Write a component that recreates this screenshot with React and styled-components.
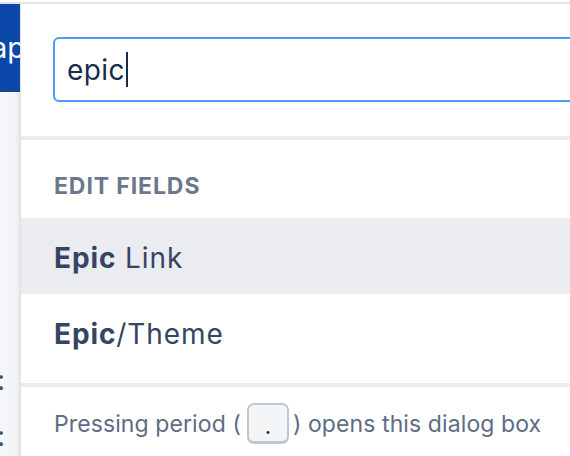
import React from "react";
import styled, { createGlobalStyle } from "styled-components";

const Global = createGlobalStyle`
  html, body {
    margin: 0;
    padding: 0;
    background: #ffffff;
    overflow: hidden;
  }
  body {
    font-family: Inter, "Noto Sans", sans-serif;
  }
`;

const Page = styled.div`
  width: 570px;
  height: 456px;
  overflow: hidden;
  padding-top: 2px;
  box-sizing: border-box;
`;

const TopLine = styled.div`
  height: 2px;
  background: #e4e4e6;
`;

const Body = styled.div`
  display: flex;
  height: 452px;
`;

const Side = styled.div`
  width: 20px;
  flex-shrink: 0;
  display: flex;
  flex-direction: column;
  overflow: hidden;
  background: linear-gradient(to right, #f7f8fa 0%, #f2f3f6 80%, #e3e5ea 100%);
`;

const SideHeader = styled.div`
  flex-shrink: 0;
  height: 88px;
  background: #0b47a8;
  border-bottom: 1px solid #3a3f4a;
  display: flex;
  justify-content: flex-end;
  align-items: center;
  color: #ffffff;
  font-size: 29px;
  white-space: nowrap;
  box-sizing: border-box;
`;

const SideHeaderText = styled.span`
  margin-right: -5px;
`;

const SideLabel = styled.div`
  flex-shrink: 0;
  display: flex;
  justify-content: flex-end;
  white-space: nowrap;
  color: #42526e;
  font-size: 28px;
  line-height: 56px;
  margin-top: ${(p) => p.$top || 0}px;
`;

const SideLabelText = styled.span`
  margin-right: 15px;
`;

const Dialog = styled.div`
  flex: 1;
  min-width: 0;
  background: #ffffff;
  display: flex;
  flex-direction: column;
  border-left: 1px solid #dfe1e6;
`;

const Search = styled.div`
  padding: 33px 0 34px 32px;
  border-bottom: 4px solid #ebecf0;
`;

const Input = styled.div`
  width: 700px;
  height: 65px;
  box-sizing: border-box;
  border: 2.5px solid #4c9aff;
  border-radius: 6px;
  display: flex;
  align-items: center;
  padding-left: 12px;
  font-size: 28px;
  letter-spacing: 0.4px;
  color: #172b4d;
`;

const Caret = styled.span`
  display: inline-block;
  width: 2px;
  height: 35px;
  background: #172b4d;
  margin-left: 1px;
`;

const List = styled.div`
  padding-bottom: 13px;
  border-bottom: 4px solid #ebecf0;
`;

const Heading = styled.div`
  padding: 32px 0 0 33px;
  height: 78px;
  box-sizing: border-box;
  font-size: 23px;
  font-weight: 700;
  letter-spacing: 0.9px;
  color: #6b778c;
  text-transform: uppercase;
`;

const Item = styled.div`
  height: 76px;
  display: flex;
  align-items: center;
  padding-left: 33px;
  padding-top: 3px;
  box-sizing: border-box;
  font-size: 28px;
  letter-spacing: 0.9px;
  color: #344563;
  background: ${(p) => (p.$active ? "#ebecf0" : "transparent")};
`;

const Match = styled.b`
  font-weight: 700;
`;

const Footer = styled.div`
  flex: 1;
  display: flex;
  align-items: center;
  padding-left: 33px;
  padding-top: 4px;
  font-size: 23px;
  letter-spacing: 0.1px;
  color: #5e6c84;
  white-space: nowrap;
`;

const Kbd = styled.span`
  display: inline-flex;
  align-items: flex-end;
  justify-content: center;
  width: 42px;
  height: 41px;
  box-sizing: border-box;
  margin: 0 4px 0 6px;
  border: 2px solid #c1c7d0;
  border-bottom-width: 3px;
  border-radius: 7px;
  background: #f4f5f7;
  color: #172b4d;
  font-size: 22px;
  line-height: 30px;
`;

export default function App() {
  return (
    <>
      <Global />
      <Page>
        <TopLine />
        <Body>
          <Side>
            <SideHeader>
              <SideHeaderText>Roadmap</SideHeaderText>
            </SideHeader>
            <SideLabel $top={260}>
              <SideLabelText>Labels:</SideLabelText>
            </SideLabel>
            <SideLabel>
              <SideLabelText>Sprint:</SideLabelText>
            </SideLabel>
          </Side>
          <Dialog>
            <Search>
              <Input>
                epic
                <Caret />
              </Input>
            </Search>
            <List>
              <Heading>Edit fields</Heading>
              <Item $active>
                <Match>Epic</Match>&nbsp;Link
              </Item>
              <Item>
                <Match>Epic</Match>/Theme
              </Item>
            </List>
            <Footer>
              Pressing period (<Kbd>.</Kbd>) opens this dialog box
            </Footer>
          </Dialog>
        </Body>
      </Page>
    </>
  );
}
